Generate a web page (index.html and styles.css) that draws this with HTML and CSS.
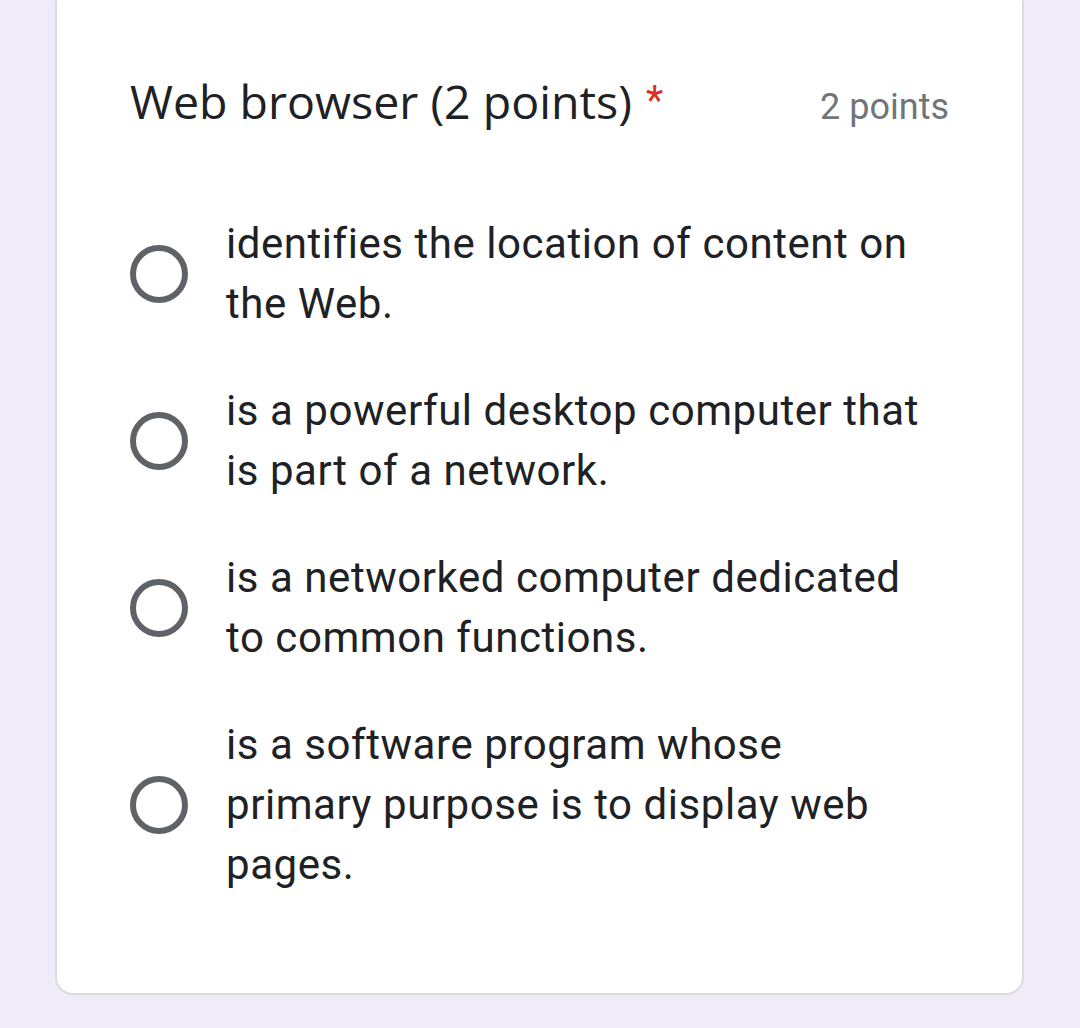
FILE: index.html
```html
<!DOCTYPE html>
<html lang="en">
<head>
    <meta charset="UTF-8">
    <meta name="viewport" content="width=device-width, initial-scale=1.0">
    <title>Web browser</title>
    <link rel="stylesheet" href="styles.css">
</head>
<body>
    <div class="card">
        <div class="question-header">
            <h2 class="question-title">Web browser (2 points) <span class="required">*</span></h2>
            <span class="points">2 points</span>
        </div>
        <div class="options">
            <label class="option">
                <span class="radio"></span>
                <span class="option-text">identifies the location of content on the Web.</span>
            </label>
            <label class="option">
                <span class="radio"></span>
                <span class="option-text">is a powerful desktop computer that is part of a network.</span>
            </label>
            <label class="option">
                <span class="radio"></span>
                <span class="option-text">is a networked computer dedicated to common functions.</span>
            </label>
            <label class="option">
                <span class="radio"></span>
                <span class="option-text">is a software program whose primary purpose is to display web pages.</span>
            </label>
        </div>
    </div>
</body>
</html>
```

FILE: styles.css
```css
/* Basic reset */
* {
    box-sizing: border-box;
    margin: 0;
    padding: 0;
}

body {
    font-family: Roboto, 'Liberation Sans', sans-serif;
    background-color: #f0ebf8;
    color: #202124;
    height: 1028px;
    overflow: hidden;
}

.card {
    width: 969px;
    margin: -14px 0 0 55px;
    padding: 83px 73px 98px 73px;
    background-color: #fff;
    border: 2px solid #dadce0;
    border-radius: 18px;
}

.question-header {
    display: flex;
    justify-content: space-between;
    align-items: baseline;
    height: 60px;
}

.question-title {
    font-family: 'Open Sans', Roboto, sans-serif;
    font-size: 46.5px;
    font-weight: 400;
    line-height: 60px;
    letter-spacing: 0;
}

.required {
    font-family: Roboto, sans-serif;
    font-size: 40px;
    margin-left: 2px;
    vertical-align: top;
    color: #d93025;
}

.points {
    font-size: 36px;
    color: #70757a;
    line-height: 60px;
}

.options {
    display: flex;
    flex-direction: column;
    gap: 47px;
    margin-top: 83px;
}

.option {
    display: flex;
    align-items: center;
}

.radio {
    flex: none;
    width: 58px;
    height: 58px;
    border: 6px solid #5f6368;
    border-radius: 50%;
}

.option-text {
    margin-left: 38px;
    max-width: 700px;
    font-size: 42px;
    line-height: 60px;
    letter-spacing: 0.55px;
}
```
